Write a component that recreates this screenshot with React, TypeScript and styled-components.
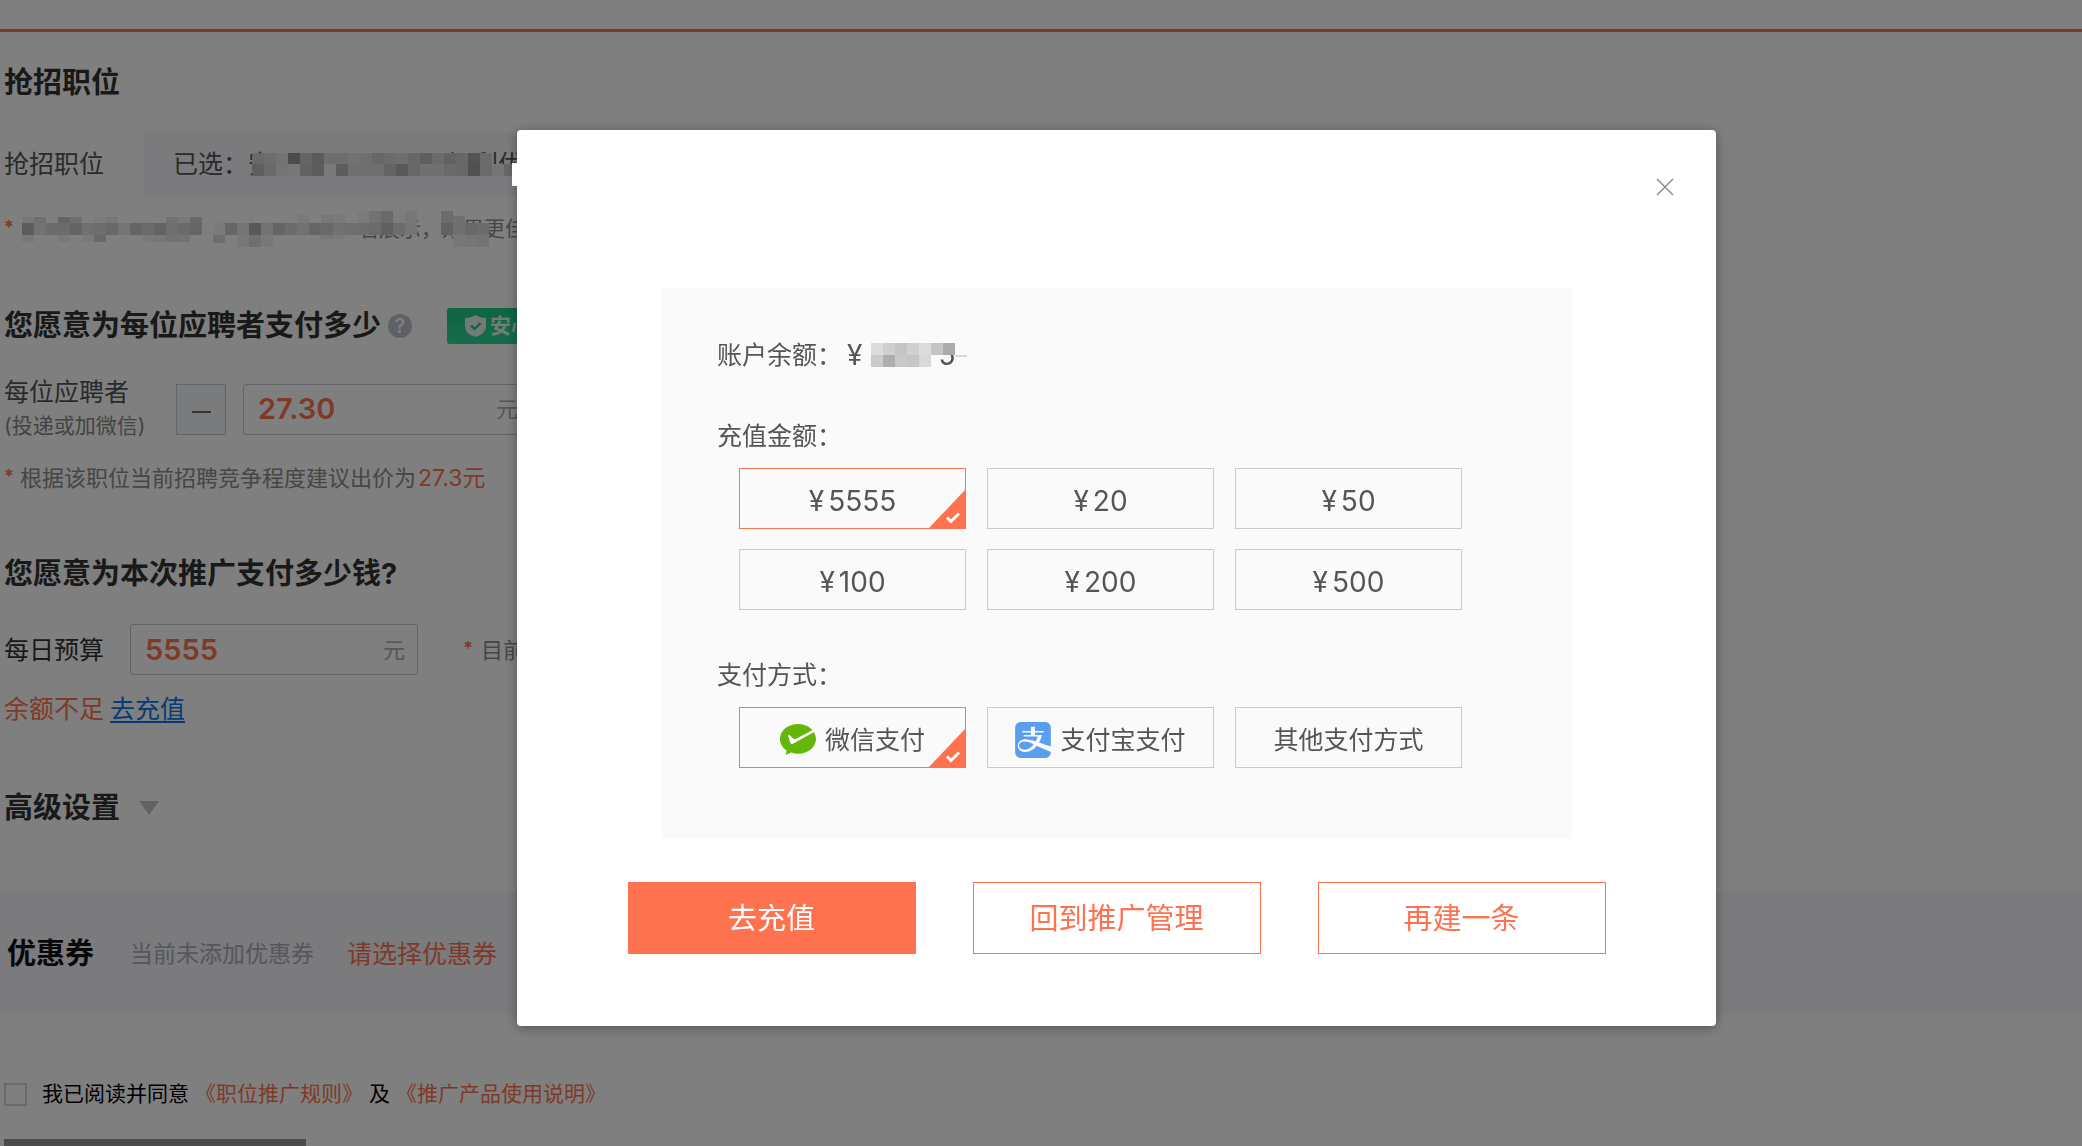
import React, { useState } from 'react';
import styled, { createGlobalStyle, css } from 'styled-components';
import { SiAlipay } from 'react-icons/si';

const orange = '#ff7250';

const GlobalStyle = createGlobalStyle`
  *, *::before, *::after { box-sizing: border-box; }
  body {
    margin: 0;
    overflow: hidden;
    background: #fff;
    color: #555;
    font-family: Inter, "Noto Sans CJK SC", sans-serif;
    font-size: 25px;
    line-height: 34px;
  }
  button, input { font: inherit; color: inherit; margin: 0; padding: 0; border-radius: 0; }
  button { cursor: pointer; }
`;

/* ---------- page behind the dialog ---------- */

const Page = styled.main`
  height: 100vh;
  overflow: hidden;
`;

const TopBar = styled.header`
  height: 32px;
  border-bottom: 3px solid ${orange};
`;

const Section = styled.section<{ $top: number }>`
  padding: ${(p) => p.$top}px 4px 0;
`;

const Title = styled.h2`
  display: flex;
  align-items: center;
  margin: 0;
  color: #333;
  font-size: 29px;
  font-weight: 700;
  line-height: 42px;
`;

const HelpButton = styled.button`
  width: 24px;
  height: 24px;
  margin-left: 7px;
  border: 0;
  border-radius: 50%;
  background: #bcc2ca;
  color: #fff;
  font-size: 20px;
  font-weight: 600;
  line-height: 24px;
`;

const SafeBadge = styled.span`
  display: flex;
  align-items: center;
  gap: 4px;
  height: 36px;
  margin-left: 35px;
  padding: 0 18px;
  border-radius: 3px;
  background: linear-gradient(#1cca84, #2ed898);
  color: #e6f5ee;
  font-size: 21px;
`;

const Row = styled.div<{ $top: number; $gap?: number }>`
  display: flex;
  align-items: center;
  gap: ${(p) => p.$gap ?? 0}px;
  margin-top: ${(p) => p.$top}px;
`;

const FieldLabel = styled.label<{ $width: number; $dark?: boolean }>`
  flex: none;
  width: ${(p) => p.$width}px;
  color: ${(p) => (p.$dark ? '#333' : '#555')};
`;

const SubLabel = styled.small`
  display: block;
  color: #888;
  font-size: 21px;
`;

const Selected = styled.div`
  position: relative;
  flex: 1;
  display: flex;
  align-items: center;
  max-width: 1200px;
  height: 65px;
  padding-left: 29px;
  background: #f6f6fa;
  white-space: nowrap;
`;

const Blank = styled.span<{ $width: number }>`
  flex: none;
  width: ${(p) => p.$width}px;
`;

const Note = styled.p<{ $top?: number; $size?: number }>`
  position: relative;
  display: flex;
  margin: ${(p) => p.$top ?? 0}px 0 0;
  color: #8c8c8c;
  font-size: ${(p) => p.$size ?? 22}px;
  line-height: 32px;
  white-space: nowrap;
`;

const Star = styled.span`
  width: 16px;
  color: ${orange};
  font-size: 18px;
  font-weight: 700;
  line-height: 28px;
`;

const Hot = styled.span<{ $size?: number }>`
  color: ${orange};
  font-size: ${(p) => p.$size ?? 25}px;
`;

const MinusButton = styled.button`
  display: flex;
  align-items: center;
  justify-content: center;
  width: 50px;
  height: 51px;
  border: 1px solid #c4cad2;
  background: #f5f7fa;

  &::before {
    content: '';
    width: 19px;
    height: 2px;
    margin-top: 5px;
    background: #666;
  }
`;

const AmountBox = styled.span`
  display: flex;
  align-items: center;
  width: 288px;
  height: 51px;
  padding: 0 12px 0 14px;
  border: 1px solid #c0c8d6;
  border-radius: 3px;
  color: #acacb8;
  font-size: 22px;
`;

const AmountInput = styled.input`
  flex: 1;
  min-width: 0;
  border: 0;
  outline: 0;
  background: transparent;
  color: ${orange};
  font-size: 29px;
  font-weight: 600;
  line-height: 40px;
`;

const RechargeLink = styled.a`
  color: #0a78f0;
  text-decoration: underline;
  text-decoration-thickness: 2px;
  text-underline-offset: 3px;
`;

const Triangle = styled.span`
  margin-left: 19px;
  border: 10px solid transparent;
  border-top: 14px solid #c4c4c4;
  border-bottom: 0;
`;

const CouponBand = styled.section`
  display: flex;
  align-items: center;
  height: 123px;
  margin-top: 63px;
  padding-left: 7px;
  background: #f6f6fa;
`;

const CouponTitle = styled.h2`
  margin: 0 36px 0 0;
  color: #111;
  font-size: 29px;
`;

const CouponHint = styled.span`
  margin-right: 33px;
  color: #aaaeb8;
  font-size: 23px;
`;

const PlainLink = styled.a`
  color: ${orange};
  text-decoration: none;
`;

const Agreement = styled.div`
  display: flex;
  align-items: center;
  gap: 6px;
  margin-top: 63px;
  padding-left: 4px;
  color: #000;
  font-size: 21px;
  line-height: 32px;
`;

const Checkbox = styled.input`
  appearance: none;
  width: 23px;
  height: 23px;
  margin-right: 9px;
  border: 2px solid #d0d8de;
`;

const SubmitButton = styled.button`
  width: 302px;
  height: 60px;
  margin: 29px 0 0 4px;
  border: 0;
  background: #999;
  color: #fff;
`;

/* ---------- dialog ---------- */

const Overlay = styled.div`
  position: fixed;
  inset: 0;
  display: flex;
  justify-content: center;
  align-items: flex-start;
  padding: 130px 0 0 151px;
  background: rgba(0, 0, 0, 0.5);
`;

const Dialog = styled.div`
  position: relative;
  width: 1199px;
  padding-bottom: 72px;
  border-radius: 4px;
  background: #fff;
  box-shadow: 0 2px 12px rgba(0, 0, 0, 0.35);

  &::before {
    content: '';
    position: absolute;
    left: -5px;
    top: 33px;
    width: 6px;
    height: 23px;
    background: #fff;
  }
`;

const DialogHead = styled.div`
  display: flex;
  justify-content: flex-end;
  height: 158px;
  padding: 41px 35px 0 0;
`;

const CloseButton = styled.button`
  display: flex;
  align-items: center;
  justify-content: center;
  width: 32px;
  height: 32px;
  border: 0;
  background: none;
`;

const Panel = styled.div`
  margin: 0 144px;
  padding: 51px 56px 71px;
  background: #fafafa;
`;

const Balance = styled.div`
  position: relative;
  display: flex;
  line-height: 32px;
`;

const Money = styled.span`
  font-size: 28px;
`;

const Yen = styled.span`
  margin-right: 4px;
`;

const Group = styled.section`
  margin-top: 47px;
`;

const GroupTitle = styled.h3`
  margin: 0 0 14px;
  font-size: 25px;
  font-weight: 400;
  line-height: 36px;
`;

const Options = styled.div`
  display: grid;
  grid-template-columns: repeat(3, 227px);
  gap: 20px 21px;
  padding-left: 22px;
`;

const Option = styled.button<{ $large?: boolean }>`
  position: relative;
  display: flex;
  align-items: center;
  justify-content: center;
  height: 61px;
  padding-top: 4px;
  border: 1px solid ${(p) => (p['aria-pressed'] ? orange : '#c4ccd4')};
  background: transparent;
  font-size: ${(p) => (p.$large ? 28 : 25)}px;
  line-height: 34px;

  > svg:first-child { margin-right: 9px; }
`;

const Corner = styled.svg`
  position: absolute;
  right: 0;
  bottom: 0;
`;

const Actions = styled.div`
  display: flex;
  justify-content: center;
  gap: 57px;
  margin-top: 43px;
`;

const ActionButton = styled.button<{ $primary?: boolean }>`
  width: 288px;
  height: 72px;
  padding-top: 2px;
  border: 1px solid ${orange};
  background: #fff;
  color: ${orange};
  font-size: 29px;
  ${(p) =>
    p.$primary &&
    css`
      background: ${orange};
      color: #fff;
    `}
`;

/* ---------- pixelated masks over private text ---------- */

const MaskSvg = styled.svg<{ $left: number; $top: number }>`
  position: absolute;
  left: ${(p) => p.$left}px;
  top: ${(p) => p.$top}px;
`;

type Strip = { x: number; y: number; h: number; tones: string };

/* Each tone is a two-digit grey level; ".." leaves the cell clear. */
function Mask({ left, top, width, height, strips }: {
  left: number; top: number; width: number; height: number; strips: Strip[];
}) {
  return (
    <MaskSvg $left={left} $top={top} width={width} height={height} shapeRendering="crispEdges" aria-hidden="true">
      {strips.flatMap((s, r) =>
        s.tones.split(' ').map((t, i) =>
          t === '..' ? null : (
            <rect key={`${r}-${i}`} x={s.x + i * 12} y={s.y} width={12} height={s.h} fill={`#${t}${t}${t}`} />
          ),
        ),
      )}
    </MaskSvg>
  );
}

const jobMask: Strip[] = [
  { x: 0, y: 0, h: 11, tones: 'd2 dc e6 98 ca b6 dc da e4 de d0 d8 dc ce bc d6 c4 d0 a6 d8' },
  { x: 0, y: 11, h: 12, tones: 'be d4 e8 ee c4 b8 f2 ba e0 e0 e0 c8 b0 d0 e0 e0 d4 d0 a2 d6 ea cc' },
];

const noteMask: Strip[] = [
  { x: 0, y: 6, h: 6, tones: 'f0 de .. ca de .. f6 ee .. .. .. .. e4 f2 d2' },
  { x: 0, y: 12, h: 12, tones: 'ba e4 d8 d8 c8 e0 dc d2 ea ca d6 c6 de d6 cc' },
  { x: 0, y: 24, h: 7, tones: 'f0 .. .. f0 .. f4 d2 .. .. .. f2 ee e4 e8' },
  { x: 191, y: 12, h: 12, tones: 'f6 ce ea b2 e6 c8 d8 e2 cc d2 e2 de dc d6 c0 da ea' },
  { x: 191, y: 24, h: 8, tones: 'de .. ee de f0' },
  { x: 215, y: 32, h: 4, tones: 'ee de f0' },
  { x: 275, y: 4, h: 8, tones: 'f2 .. ee f4 ..' },
  { x: 299, y: 24, h: 4, tones: 'ec f2' },
  { x: 323, y: 0, h: 12, tones: '.. f6 e4 d4 fa ee' },
  { x: 419, y: 0, h: 12, tones: 'd8' },
  { x: 431, y: 5, h: 7, tones: 'e0' },
  { x: 419, y: 12, h: 12, tones: 'c4 e0 d0 d8' },
  { x: 431, y: 24, h: 12, tones: 'ee ec e6' },
];

const balanceMask: Strip[] = [
  { x: 0, y: 10, h: 12, tones: 'dc cf c5 d0 dc c4 ab' },
  { x: 84, y: 22, h: 2, tones: 'd8' },
  { x: 0, y: 22, h: 12, tones: 'cb ae c8 c6 d9' },
];

function SelectedCorner() {
  return (
    <Corner width="36" height="38" viewBox="0 0 36 38" aria-hidden="true">
      <path d="M36 0V38H0Z" fill={orange} />
      <path d="M18 27.5l4 4 8-8" fill="none" stroke="#fff" strokeWidth="3" />
    </Corner>
  );
}

function WechatPayIcon() {
  return (
    <svg width="36" height="31" viewBox="0 0 36 31" aria-hidden="true">
      <path
        d="M18 0C8 0 0 6.600 0 15c0 4.700 2.600 8.800 6.600 11.500L5.800 31l5.300-2.500C13.200 29.300 15.600 29.700 18 29.700c10 0 18-6.600 18-14.700S28 0 18 0Z"
        fill="#64b708"
      />
      <path d="M8 11.600c.4-.9 1.300-.8 2 0l3.400 3.200c.8.600 1.800.5 2.800 0L32.800 6l.9 2.200-20.300 11.400c-1.600.8-2.700.2-3.200-1.200Z" fill="#fff" />
    </svg>
  );
}

const amounts = ['5555', '20', '50', '100', '200', '500'];

const methods = [
  { name: '微信支付', icon: <WechatPayIcon /> },
  { name: '支付宝支付', icon: <SiAlipay size={36} color="#5b9eee" aria-hidden="true" /> },
  { name: '其他支付方式', icon: null },
];

function RechargeDialog() {
  const [amount, setAmount] = useState('5555');
  const [method, setMethod] = useState('微信支付');
  return (
    <Overlay>
      <Dialog role="dialog" aria-modal="true">
        <DialogHead>
          <CloseButton type="button" aria-label="关闭">
            <svg width="18" height="18" viewBox="0 0 18 18" aria-hidden="true">
              <path d="M1 1l16 16M17 1L1 17" stroke="#8c9098" strokeWidth="1.600" />
            </svg>
          </CloseButton>
        </DialogHead>
        <Panel>
          <Balance>
            账户余额：
            <Blank $width={5} />
            <Money>¥</Money>
            <Blank $width={76} />
            <Money>5</Money>
            <Mask left={154} top={-6} width={96} height={34} strips={balanceMask} />
          </Balance>
          <Group>
            <GroupTitle>充值金额：</GroupTitle>
            <Options>
              {amounts.map((a) => (
                <Option key={a} type="button" $large aria-pressed={a === amount} onClick={() => setAmount(a)}>
                  <Yen>¥</Yen>
                  {a}
                  {a === amount && <SelectedCorner />}
                </Option>
              ))}
            </Options>
          </Group>
          <Group>
            <GroupTitle>支付方式：</GroupTitle>
            <Options>
              {methods.map((m) => (
                <Option key={m.name} type="button" aria-pressed={m.name === method} onClick={() => setMethod(m.name)}>
                  {m.icon}
                  <span>{m.name}</span>
                  {m.name === method && <SelectedCorner />}
                </Option>
              ))}
            </Options>
          </Group>
        </Panel>
        <Actions>
          <ActionButton type="button" $primary>去充值</ActionButton>
          <ActionButton type="button">回到推广管理</ActionButton>
          <ActionButton type="button">再建一条</ActionButton>
        </Actions>
      </Dialog>
    </Overlay>
  );
}

export default function App() {
  return (
    <>
      <GlobalStyle />
      <Page>
        <TopBar />
        <Section $top={30}>
          <Title>抢招职位</Title>
          <Row $top={27}>
            <FieldLabel as="span" $width={140}>抢招职位</FieldLabel>
            <Selected>
              已选：安
              <Blank $width={175} />
              福利优
              <Mask left={108} top={22} width={260} height={23} strips={jobMask} />
            </Selected>
          </Row>
          <Note $top={17} $size={21}>
            <Star>*</Star>
            <Blank $width={338} />
            名展示，效果更佳
            <Mask left={18} top={-2} width={476} height={36} strips={noteMask} />
          </Note>
        </Section>

        <Section $top={60}>
          <Title>
            您愿意为每位应聘者支付多少
            <HelpButton type="button">?</HelpButton>
            <SafeBadge>
              <svg width="21" height="22" viewBox="0 0 21 22" aria-hidden="true">
                <path d="M10.500 0C13 2 17 3 21 3v8c0 6-5 9.500-10.500 11C5 20.500 0 17 0 11V3c4 0 8-1 10.500-3Z" fill="#e6f5ee" />
                <path d="M6 10.500l3.500 3.500 6-6" fill="none" stroke="#2cc98a" strokeWidth="2.400" />
              </svg>
              安心
            </SafeBadge>
          </Title>
          <Row $top={28}>
            <FieldLabel htmlFor="bid" $width={172}>
              每位应聘者
              <SubLabel>(投递或加微信)</SubLabel>
            </FieldLabel>
            <Row $top={0} $gap={17}>
              <MinusButton type="button" aria-label="减少" />
              <AmountBox>
                <AmountInput id="bid" defaultValue="27.30" />
                元
              </AmountBox>
            </Row>
          </Row>
          <Note $top={19}>
            <Star>*</Star>
            根据该职位当前招聘竞争程度建议出价为
            <Blank $width={2} />
            <Hot $size={23}>27.3元</Hot>
          </Note>
        </Section>

        <Section $top={59}>
          <Title>您愿意为本次推广支付多少钱?</Title>
          <Row $top={29}>
            <FieldLabel htmlFor="budget" $width={126} $dark>每日预算</FieldLabel>
            <AmountBox>
              <AmountInput id="budget" defaultValue="5555" />
              元
            </AmountBox>
            <Blank $width={45} />
            <Note>
              <Star>*</Star>
              <Blank $width={2} />
              目前
            </Note>
          </Row>
          <Row $top={17} $gap={6}>
            <Hot>余额不足</Hot>
            <RechargeLink href="#recharge">去充值</RechargeLink>
          </Row>
        </Section>

        <Section $top={61}>
          <Title>
            高级设置
            <Triangle />
          </Title>
        </Section>

        <CouponBand>
          <CouponTitle>优惠券</CouponTitle>
          <CouponHint>当前未添加优惠券</CouponHint>
          <PlainLink href="#coupon">请选择优惠券</PlainLink>
        </CouponBand>

        <Agreement>
          <Checkbox type="checkbox" id="agree" />
          <label htmlFor="agree">我已阅读并同意</label>
          <PlainLink href="#rules">《职位推广规则》</PlainLink>
          <span>及</span>
          <PlainLink href="#manual">《推广产品使用说明》</PlainLink>
        </Agreement>
        <SubmitButton type="button" aria-label="提交" />
      </Page>
      <RechargeDialog />
    </>
  );
}
